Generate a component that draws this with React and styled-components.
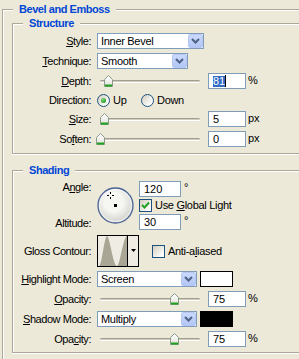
import styled, { createGlobalStyle } from "styled-components";

const GlobalStyle = createGlobalStyle`
  html, body {
    margin: 0;
    padding: 0;
    background: #ece9d8;
    overflow: hidden;
  }
  body {
    font-family: "Liberation Sans", Arial, sans-serif;
    font-size: 11px;
    color: #000;
  }
`;

const Page = styled.div`
  width: 297px;
  padding: 2px 0 0 2px;
`;

const Group = styled.fieldset`
  margin: ${(p) => p.$top || 0}px 0 0 0;
  min-width: 0;
  border: 1px solid #aca899;
  border-right: none;
  box-shadow: inset 1px 1px 0 #fff, 0 1px 0 #fff;
  padding: ${(p) => p.$pad};
`;

const Legend = styled.legend`
  margin-left: ${(p) => p.$inset}px;
  padding: 0 6px;
  font-weight: bold;
  color: #0046d5;
  line-height: 14px;
  letter-spacing: -0.45px;
  background: #ece9d8;
`;

const Form = styled.div`
  display: grid;
  grid-template-columns: 78px 1fr;
  grid-template-rows: ${(p) => p.$rows};
  column-gap: 6px;
  row-gap: 4px;
  align-items: center;
  padding-top: ${(p) => p.$top}px;
`;

const Label = styled.div`
  text-align: right;
  white-space: nowrap;
  line-height: 16px;
  letter-spacing: -0.45px;
  align-self: ${(p) => (p.$stretch ? "stretch" : "center")};
  display: ${(p) => (p.$stretch ? "flex" : "block")};
  flex-direction: column;
  justify-content: space-between;
`;

const Key = styled.u`
  text-decoration: underline;
  text-underline-offset: 1px;
`;

const Row = styled.div`
  display: flex;
  align-items: center;
  gap: ${(p) => p.$gap || 0}px;
`;

const SelectBox = styled.div`
  width: ${(p) => p.$w}px;
  height: 16px;
  box-sizing: border-box;
  border: 1px solid #7f9db9;
  background: #fff;
  display: flex;
  align-items: center;
  padding: 0 0 0 3px;
  flex: none;
`;

const SelectText = styled.span`
  flex: 1;
  line-height: 14px;
  letter-spacing: -0.3px;
`;

const DropButton = styled.span`
  width: 15px;
  height: 14px;
  box-sizing: border-box;
  border: 1px solid #b5c8f4;
  border-radius: 2px;
  background: linear-gradient(#cad9fc, #b3c7f5);
  display: flex;
  align-items: center;
  justify-content: center;
`;

const Field = styled.div`
  width: ${(p) => p.$w}px;
  height: 16px;
  box-sizing: border-box;
  border: 1px solid #7f9db9;
  background: #fff;
  padding-left: 4px;
  line-height: 14px;
  flex: none;
  display: flex;
  align-items: center;
`;

const Selected = styled.span`
  background: #316ac5;
  color: #fff;
  line-height: 11px;
`;

const Caret = styled.span`
  width: 1px;
  height: 12px;
  background: #000;
`;

const Unit = styled.span`
  margin-left: 2px;
  align-self: flex-start;
  line-height: 14px;
`;

const Degree = styled.span`
  margin-left: 3px;
  align-self: flex-start;
  line-height: 12px;
`;

const SliderBox = styled.div`
  position: relative;
  width: 100px;
  height: 16px;
  margin: 0 8px 0 3px;
  display: flex;
  align-items: center;
  flex: none;
`;

const Rail = styled.div`
  width: 100%;
  height: 3px;
  box-sizing: border-box;
  border-radius: 2px;
  border-top: 1px solid #a29f91;
  border-bottom: 1px solid #fff;
  background: #cfccbf;
`;

const ThumbWrap = styled.svg`
  position: absolute;
  top: 2px;
`;

const Option = styled.label`
  display: flex;
  align-items: center;
  gap: 3px;
  width: ${(p) => p.$w || "auto"};
  letter-spacing: -0.3px;
  white-space: nowrap;
`;

const RadioDot = styled.span`
  width: 13px;
  height: 13px;
  box-sizing: border-box;
  border-radius: 50%;
  border: 1px solid #1c5180;
  background: linear-gradient(135deg, #d8d3c6 10%, #fff 85%);
  display: flex;
  align-items: center;
  justify-content: center;
  flex: none;
`;

const RadioMark = styled.span`
  width: 5px;
  height: 5px;
  border-radius: 50%;
  background: radial-gradient(circle at 40% 35%, #7fd77f, #21a121 70%);
`;

const CheckBox = styled.span`
  width: 13px;
  height: 13px;
  box-sizing: border-box;
  border: 1px solid #1c5180;
  background: linear-gradient(135deg, #d8d3c6 10%, #fff 85%);
  display: flex;
  align-items: center;
  justify-content: center;
  flex: none;
`;

const AngleArea = styled.div`
  display: flex;
  align-items: center;
  gap: 5px;
`;

const Stack = styled.div`
  display: flex;
  flex-direction: column;
  gap: 2px;
`;

const ContourBox = styled.div`
  width: 42px;
  height: 32px;
  box-sizing: border-box;
  border: 1px solid #000;
  background: #efede3;
  display: flex;
  flex: none;
  margin-right: 13px;
`;

const ContourMenu = styled.div`
  flex: 1;
  border-left: 1px solid #000;
  display: flex;
  align-items: center;
  justify-content: center;
  padding-bottom: 2px;
`;

const Swatch = styled.span`
  width: 33px;
  height: 16px;
  box-sizing: border-box;
  border: 1px solid #000;
  background: ${(p) => p.$color};
  margin-left: 3px;
  flex: none;
`;

function Chevron() {
  return (
    <svg width="9" height="6" viewBox="0 0 9 6">
      <path d="M1 1 L4.5 4.5 L8 1" fill="none" stroke="#4d6185" strokeWidth="2" />
    </svg>
  );
}

function Select({ w, value }) {
  return (
    <SelectBox $w={w}>
      <SelectText>{value}</SelectText>
      <DropButton>
        <Chevron />
      </DropButton>
    </SelectBox>
  );
}

function Slider({ pos }) {
  return (
    <SliderBox>
      <Rail />
      <ThumbWrap width="9" height="12" viewBox="0 0 9 12" style={{ left: Math.round(pos * 98 - 4) }}>
        <defs>
          <linearGradient id="thumbFill" x1="0" y1="0" x2="0" y2="1">
            <stop offset="0" stopColor="#ffffff" />
            <stop offset="1" stopColor="#e2e1da" />
          </linearGradient>
        </defs>
        <polygon points="4.5,0.5 8.5,4.5 8.5,11.5 0.5,11.5 0.5,4.5" fill="url(#thumbFill)" stroke="#8a9a8a" />
        <rect x="1" y="9.5" width="7" height="2" fill="#21a121" />
      </ThumbWrap>
    </SliderBox>
  );
}

function Radio({ checked }) {
  return <RadioDot>{checked && <RadioMark />}</RadioDot>;
}

function Check({ checked }) {
  return (
    <CheckBox>
      {checked && (
        <svg width="9" height="9" viewBox="0 0 9 9">
          <path d="M1 4 L3.5 6.5 L8 1.5" fill="none" stroke="#21a121" strokeWidth="2" />
        </svg>
      )}
    </CheckBox>
  );
}

function Dial() {
  return (
    <svg width="37" height="37" viewBox="0 0 37 37">
      <defs>
        <radialGradient id="dialFill" cx="45%" cy="40%" r="60%">
          <stop offset="0.45" stopColor="#f6f6f3" />
          <stop offset="1" stopColor="#cfcfcc" />
        </radialGradient>
      </defs>
      <circle cx="18.5" cy="18.5" r="17.5" fill="url(#dialFill)" stroke="#4a6496" strokeWidth="1.3" />
      <circle cx="18.5" cy="18.5" r="16" fill="none" stroke="#ffffff" strokeOpacity="0.7" />
      <path d="M10 8.5 H12 M15 8.5 H17 M13.5 5 V7 M13.5 10 V12" stroke="#000" strokeWidth="1" />
      <rect x="17" y="17" width="3" height="3" fill="#000" />
    </svg>
  );
}

function Contour() {
  return (
    <ContourBox>
      <svg width="29" height="30" viewBox="0 0 29 30">
        <path d="M1 30 C4 30 6 1 9 0 C12 1 15 30 19 30 C22 30 25 1 29 0 L29 30 Z" fill="#a9a696" />
      </svg>
      <ContourMenu>
        <svg width="5" height="3" viewBox="0 0 5 3">
          <path d="M0 0 H5 L2.5 3 Z" fill="#000" />
        </svg>
      </ContourMenu>
    </ContourBox>
  );
}

function SliderField({ pos, value, unit, selected }) {
  return (
    <Row>
      <Slider pos={pos} />
      <Field $w={38}>
        {selected ? (
          <>
            <Selected>{value}</Selected>
            <Caret />
          </>
        ) : (
          value
        )}
      </Field>
      <Unit>{unit}</Unit>
    </Row>
  );
}

export default function App() {
  return (
    <>
      <GlobalStyle />
      <Page>
        <Group $pad="0 0 12px 9px">
          <Legend $inset={1}>Bevel and Emboss</Legend>

          <Group $pad="0 0 6px 0">
            <Legend $inset={10}>Structure</Legend>
            <Form $top={3} $rows="16px 16px 16px 14px 16px 16px">
              <Label>
                <Key>S</Key>tyle:
              </Label>
              <Row>
                <Select w={107} value="Inner Bevel" />
              </Row>

              <Label>
                <Key>T</Key>echnique:
              </Label>
              <Row>
                <Select w={91} value="Smooth" />
              </Row>

              <Label>
                <Key>D</Key>epth:
              </Label>
              <SliderField pos={0.08} value="81" unit="%" selected />

              <Label>Direction:</Label>
              <Row>
                <Option $w="44px">
                  <Radio checked />
                  <span>Up</span>
                </Option>
                <Option>
                  <Radio />
                  <span>Down</span>
                </Option>
              </Row>

              <Label>
                <Key>S</Key>ize:
              </Label>
              <SliderField pos={0.04} value="5" unit="px" />

              <Label>
                So<Key>f</Key>ten:
              </Label>
              <SliderField pos={0} value="0" unit="px" />
            </Form>
          </Group>

          <Group $top={9} $pad="0 0 5px 0">
            <Legend $inset={10}>Shading</Legend>
            <Form $top={2} $rows="52px 32px 16px 16px 16px 16px">
              <Label $stretch>
                <span>
                  A<Key>n</Key>gle:
                </span>
                <span>Altitude:</span>
              </Label>
              <AngleArea>
                <Dial />
                <Stack>
                  <Row>
                    <Field $w={42}>120</Field>
                    <Degree>°</Degree>
                  </Row>
                  <Option>
                    <Check checked />
                    <span>
                      Use <Key>G</Key>lobal Light
                    </span>
                  </Option>
                  <Row>
                    <Field $w={42}>30</Field>
                    <Degree>°</Degree>
                  </Row>
                </Stack>
              </AngleArea>

              <Label>Gloss Contour:</Label>
              <Row>
                <Contour />
                <Option>
                  <Check />
                  <span>
                    Anti-a<Key>l</Key>iased
                  </span>
                </Option>
              </Row>

              <Label>
                <Key>H</Key>ighlight Mode:
              </Label>
              <Row>
                <Select w={100} value="Screen" />
                <Swatch $color="#fff" />
              </Row>

              <Label>
                <Key>O</Key>pacity:
              </Label>
              <SliderField pos={0.75} value="75" unit="%" />

              <Label>
                <Key>S</Key>hadow Mode:
              </Label>
              <Row>
                <Select w={100} value="Multiply" />
                <Swatch $color="#000" />
              </Row>

              <Label>
                Opa<Key>c</Key>ity:
              </Label>
              <SliderField pos={0.75} value="75" unit="%" />
            </Form>
          </Group>
        </Group>
      </Page>
    </>
  );
}
